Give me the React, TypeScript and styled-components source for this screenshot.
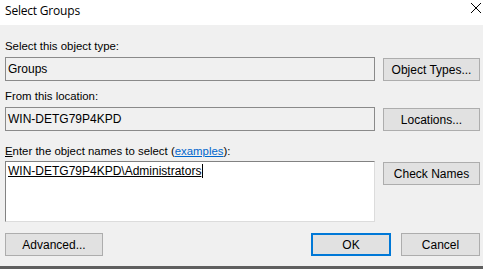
import styled, { createGlobalStyle } from "styled-components";

const GlobalStyle = createGlobalStyle`
  html, body {
    margin: 0;
    padding: 0;
    background: #f0f0f0;
  }
  body {
    font-family: "Liberation Sans", Arial, sans-serif;
    color: #000;
  }
`

const Window = styled.div`
  width: 483px;
  height: 269px;
  display: flex;
  flex-direction: column;
  background: #f0f0f0;
  border-bottom: 3px solid #5f5f5f;
  box-sizing: border-box;
  overflow: hidden;
`

const TitleBar = styled.div`
  height: 25px;
  background: #fff;
  display: flex;
  align-items: center;
  justify-content: space-between;
  padding: 0 1px 5px 5px;
  box-sizing: border-box;
`

const Title = styled.span`
  font-family: "Open Sans", "Liberation Sans", sans-serif;
  font-size: 12px;
  letter-spacing: -0.2px;
`

const CloseButton = styled.span`
  display: flex;
  width: 12px;
  height: 12px;
  margin-top: -4px;
  svg {
    width: 12px;
    height: 12px;
  }
`

const Body = styled.div`
  flex: 1;
  display: grid;
  grid-template-columns: 370px 97px;
  column-gap: 8px;
  padding: 14px 3px 0 5px;
  align-content: start;
`

const Label = styled.div<{ $gap?: number }>`
  grid-column: 1 / 3;
  font-size: 11.4px;
  line-height: 14px;
  height: 14px;
  margin-bottom: ${(p) => p.$gap ?? 4}px;
`

const Field = styled.div<{ $after?: number }>`
  height: 24px;
  box-sizing: border-box;
  border: 1px solid #8a8a8a;
  background: #f0f0f0;
  font-size: 12px;
  display: flex;
  align-items: center;
  padding-left: 2px;
  margin-bottom: ${(p) => p.$after ?? 8}px;
`

const TextArea = styled.div`
  height: 61px;
  box-sizing: border-box;
  border-top: 1px solid #828282;
  border-left: 1px solid #828282;
  border-right: 1px solid #dcdcdc;
  border-bottom: 1px solid #dcdcdc;
  background: #fff;
  font-size: 12px;
  padding: 2px 0 0 2px;
  display: flex;
  align-items: flex-start;
`

const Resolved = styled.span`
  text-decoration: underline;
  line-height: 14px;
  border-right: 1px solid #000;
  padding-right: 1px;
`

const Button = styled.button<{ $primary?: boolean; $width?: number }>`
  font-family: "Liberation Sans", Arial, sans-serif;
  font-size: 12px;
  color: #000;
  height: 23px;
  width: ${(p) => (p.$width ? `${p.$width}px` : "100%")};
  background: #e1e1e1;
  border: ${(p) => (p.$primary ? "2px solid #0078d7" : "1px solid #adadad")};
  box-sizing: border-box;
  padding: 0;
  align-self: start;
  margin-top: 1px;
`

const Accel = styled.span`
  text-decoration: underline;
`

const Link = styled.span`
  color: #0066cc;
  text-decoration: underline;
`

const Footer = styled.div`
  grid-column: 1 / 3;
  display: flex;
  align-items: center;
  margin-top: 10px;
`

const Spacer = styled.div`
  flex: 1;
`

const FooterRight = styled.div`
  display: flex;
  gap: 10px;
`

export default function App() {
  return (
    <>
      <GlobalStyle />
      <Window>
        <TitleBar>
          <Title>Select Groups</Title>
          <CloseButton>
            <svg viewBox="0 0 12 12" fill="none" stroke="#000" strokeWidth="1">
              <path d="M1 1L11 11M11 1L1 11" />
            </svg>
          </CloseButton>
        </TitleBar>
        <Body>
          <Label>Select this object type:</Label>
          <Field>Groups</Field>
          <Button>Object Types...</Button>

          <Label>From this location:</Label>
          <Field $after={13}>WIN-DETG79P4KPD</Field>
          <Button>Locations...</Button>

          <Label $gap={3}>
            <Accel>E</Accel>nter the object names to select (<Link>examples</Link>):
          </Label>
          <TextArea>
            <Resolved>WIN-DETG79P4KPD\Administrators</Resolved>
          </TextArea>
          <Button>Check Names</Button>

          <Footer>
            <Button $width={98}>Advanced...</Button>
            <Spacer />
            <FooterRight>
              <Button $primary $width={80}>OK</Button>
              <Button $width={79}>Cancel</Button>
            </FooterRight>
          </Footer>
        </Body>
      </Window>
    </>
  )
}
